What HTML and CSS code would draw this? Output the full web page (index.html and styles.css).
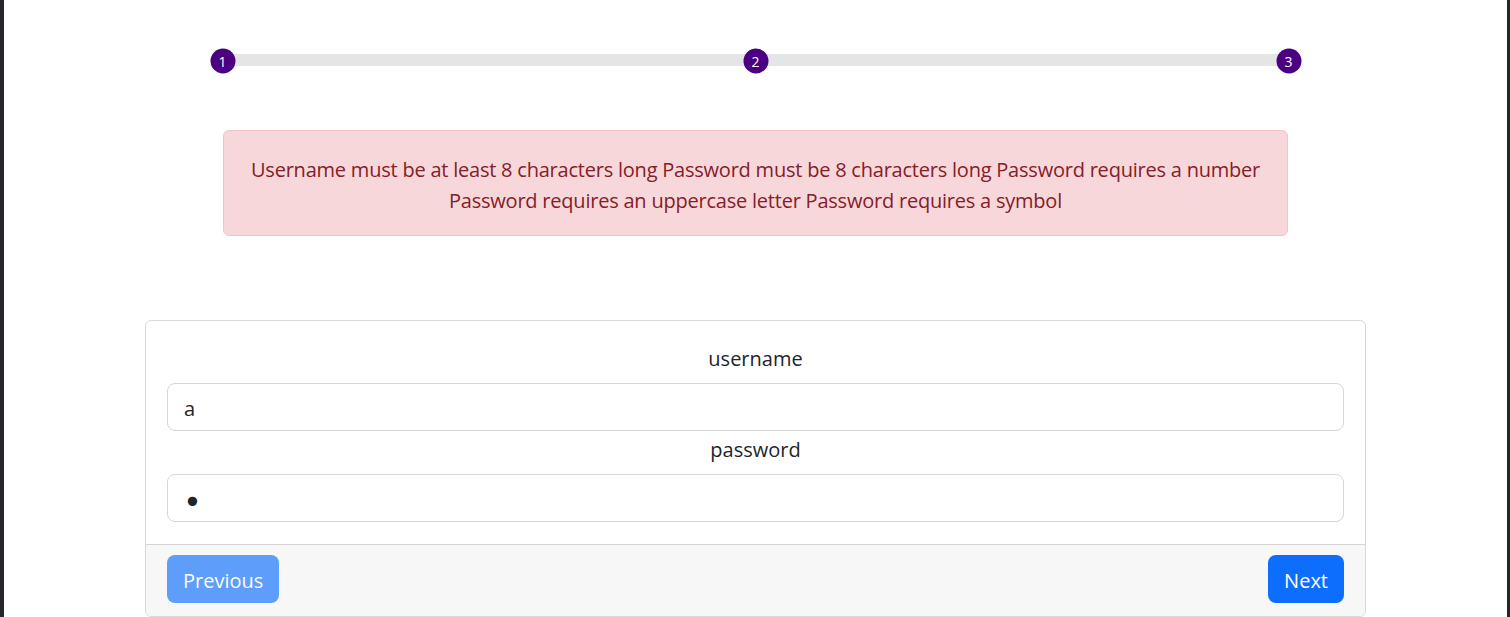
FILE: index.html
```html
<!DOCTYPE html>
<html lang="en">
<head>
<meta charset="utf-8">
<title>Signup</title>
<link rel="stylesheet" href="styles.css">
</head>
<body>
<div class="frame">
  <div class="stepper">
    <div class="track"></div>
    <span class="step step-1">1</span>
    <span class="step step-2">2</span>
    <span class="step step-3">3</span>
  </div>

  <div class="alert">Username must be at least 8 characters long Password must be 8 characters long Password requires a number Password requires an uppercase letter Password requires a symbol</div>

  <div class="card">
    <div class="card-body">
      <label class="label" for="u">username</label>
      <input class="input" id="u" type="text" value="a">
      <label class="label" for="p">password</label>
      <input class="input input-password" id="p" type="password" value="a">
    </div>
    <div class="card-footer">
      <button class="btn btn-disabled" disabled>Previous</button>
      <button class="btn">Next</button>
    </div>
  </div>
</div>
</body>
</html>
```

FILE: styles.css
```css
html, body {
  margin: 0;
  padding: 0;
  height: 100%;
}
body {
  background: #ffffff;
  font-family: "Segoe UI", "Open Sans", "Noto Sans", sans-serif;
  color: #212529;
  overflow: hidden;
}
.frame {
  box-sizing: border-box;
  height: 617px;
  border-left: 4px solid #25262b;
  border-right: 3px solid #25262b;
  display: flex;
  flex-direction: column;
  align-items: center;
}
.stepper {
  position: relative;
  width: 1066px;
  height: 12px;
  margin-top: 54px;
}
.track {
  height: 12px;
  background: #e5e5e5;
}
.step {
  position: absolute;
  top: 50%;
  width: 25px;
  height: 25px;
  border-radius: 50%;
  background: #4b0082;
  color: #ffffff;
  font-size: 14px;
  line-height: 25px;
  text-align: center;
  transform: translate(-50%, -50%);
  margin-top: 1px;
}
.step-1 { left: 0; }
.step-2 { left: 50%; }
.step-3 { left: 100%; }

.alert {
  box-sizing: border-box;
  width: 1065px;
  margin-top: 64px;
  padding: 23px 12px 19px;
  background: #f8d7da;
  border: 1px solid #f5c2c7;
  border-radius: 6px;
  color: #842029;
  font-size: 20px;
  line-height: 31px;
  letter-spacing: -0.22px;
  text-align: center;
}

.card {
  box-sizing: border-box;
  width: 1221px;
  margin-top: 84px;
  border: 1px solid #d9d9d9;
  border-radius: 6px;
  overflow: hidden;
}
.card-body {
  display: flex;
  flex-direction: column;
  padding: 23px 21px 22px;
}
.label {
  font-size: 20px;
  line-height: 30px;
  text-align: center;
  margin-bottom: 9px;
}
.input {
  box-sizing: border-box;
  height: 48px;
  width: 100%;
  border: 1px solid #d4d6d9;
  border-radius: 8px;
  padding: 3px 16px 0;
  font-family: inherit;
  font-size: 20px;
  color: #212529;
  margin-bottom: 4px;
  outline: none;
}
.input:last-child {
  margin-bottom: 0;
}
.input-password {
  font-family: "DejaVu Sans", sans-serif;
  font-size: 32px;
  padding-left: 15px;
  padding-top: 7px;
}
.label + .input + .label {
  margin-bottom: 9px;
}
.card-footer {
  display: flex;
  justify-content: space-between;
  background: #f7f7f7;
  border-top: 1px solid #d4d4d4;
  padding: 10px 21px 13px;
}
.btn {
  height: 48px;
  padding: 2px 16px 0;
  border: none;
  border-radius: 8px;
  background: #0d6efd;
  color: #ffffff;
  font-family: inherit;
  font-size: 20px;
}
.btn-disabled {
  opacity: 0.65;
}
```
